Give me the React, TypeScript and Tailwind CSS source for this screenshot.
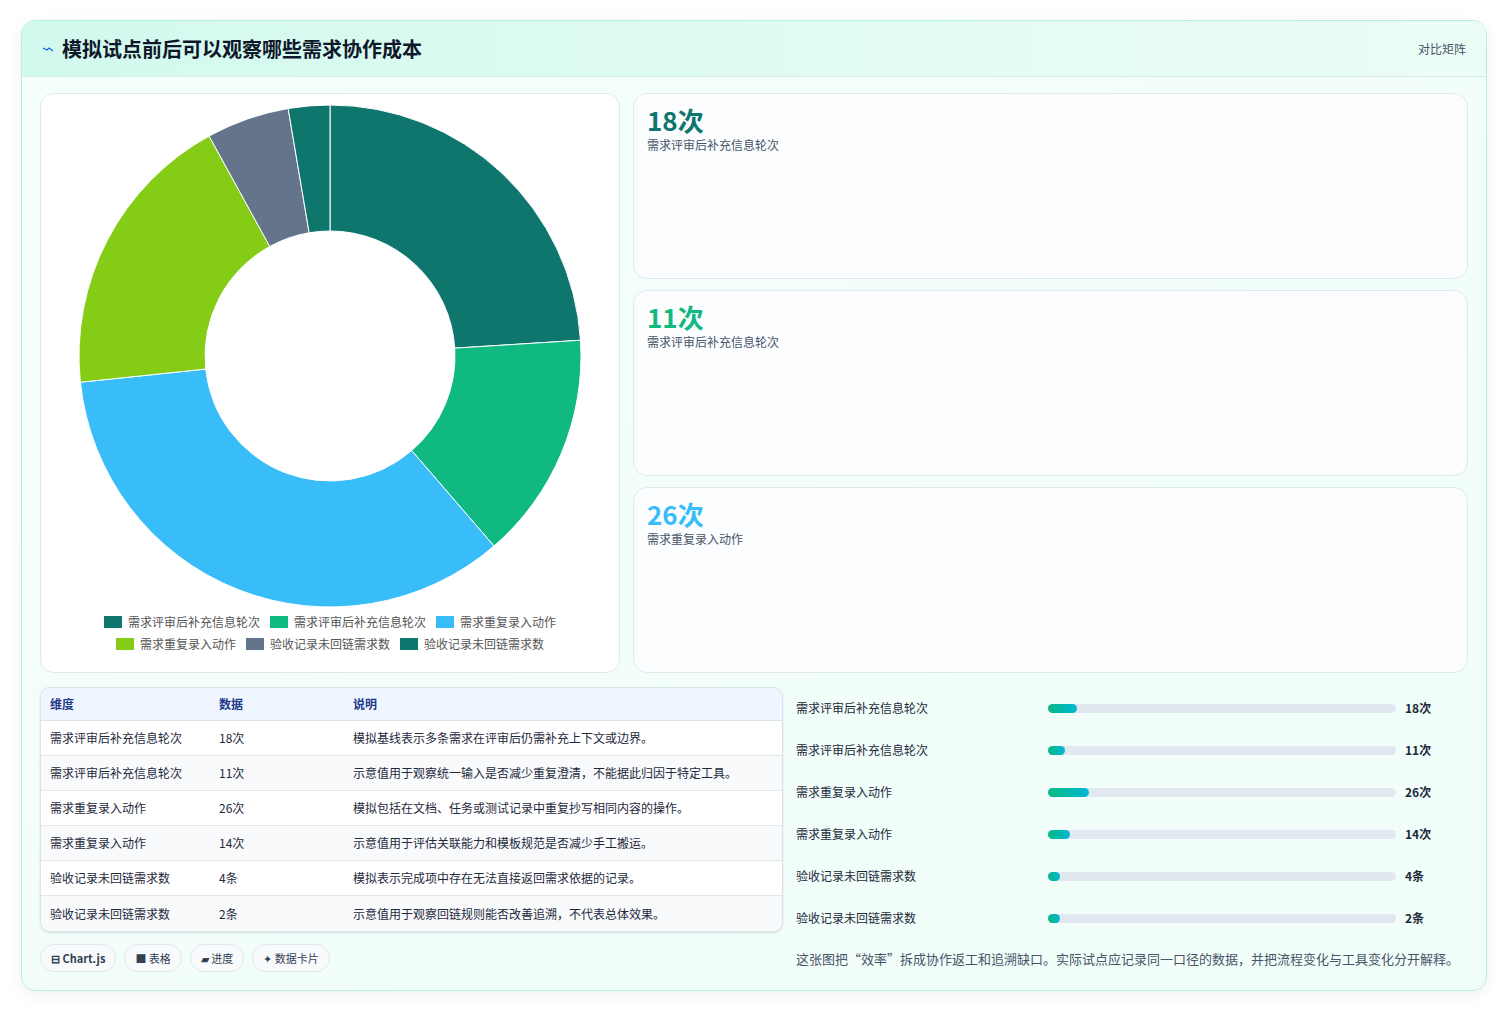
import React from "react";

const F = { fontFamily: '"Noto Sans CJK SC","Noto Sans",sans-serif' };
const data = [
  { n: "需求评审后补充信息轮次", v: 18, u: "次", c: "#0f766e", d: "模拟基线表示多条需求在评审后仍需补充上下文或边界。", w: 29 },
  { n: "需求评审后补充信息轮次", v: 11, u: "次", c: "#10b981", d: "示意值用于观察统一输入是否减少重复澄清，不能据此归因于特定工具。", w: 17 },
  { n: "需求重复录入动作", v: 26, u: "次", c: "#38bdf8", d: "模拟包括在文档、任务或测试记录中重复抄写相同内容的操作。", w: 41 },
  { n: "需求重复录入动作", v: 14, u: "次", c: "#84cc16", d: "示意值用于评估关联能力和模板规范是否减少手工搬运。", w: 22 },
  { n: "验收记录未回链需求数", v: 4, u: "条", c: "#64748b", d: "模拟表示完成项中存在无法直接返回需求依据的记录。", w: 12 },
  { n: "验收记录未回链需求数", v: 2, u: "条", c: "#0f766e", d: "示意值用于观察回链规则能否改善追溯，不代表总体效果。", w: 12 },
];

function Donut() {
  const total = data.reduce((s, d) => s + d.v, 0);
  const cx = 251, cy = 251, R = 251, r = 125;
  let a = 0;
  const pt = (ang: number, rad: number) => [cx + rad * Math.sin(ang), cy - rad * Math.cos(ang)];
  return (
    <svg width="502" height="502" viewBox="0 0 502 502">
      {data.map((d, i) => {
        const a0 = a, a1 = a + (d.v / total) * Math.PI * 2;
        a = a1;
        const large = a1 - a0 > Math.PI ? 1 : 0;
        const [x0, y0] = pt(a0, R), [x1, y1] = pt(a1, R), [x2, y2] = pt(a1, r), [x3, y3] = pt(a0, r);
        return <path key={i} d={`M${x0} ${y0}A${R} ${R} 0 ${large} 1 ${x1} ${y1}L${x2} ${y2}A${r} ${r} 0 ${large} 0 ${x3} ${y3}Z`} fill={d.c} stroke="#fff" strokeWidth="1" />;
      })}
    </svg>
  );
}

export default function App() {
  return (
    <div className="min-h-screen bg-white pt-[20px] px-[21px]" style={F}>
      <div className="w-[1466px] h-[971px] rounded-[14px] border border-[#b5efe2] bg-gradient-to-br from-[#f5fffc] to-[#f0fdf8] shadow-[0_4px_16px_rgba(0,0,0,0.06)] overflow-hidden flex flex-col">
        <div className="h-[56px] flex items-center justify-between px-[20px] bg-gradient-to-r from-[#d2f9ee] to-[#ecfdf5] border-b border-[#d6efe9]">
          <div className="flex items-center gap-[8px]">
            <svg width="12" height="10" viewBox="0 0 12 10"><path d="M1 4l4 2 2-2 4 3" stroke="#2563eb" strokeWidth="1.3" fill="none" /></svg>
            <span className="text-[20px] font-bold text-[#0f172a]">模拟试点前后可以观察哪些需求协作成本</span>
          </div>
          <span className="text-[12px] text-[#475569]">对比矩阵</span>
        </div>
        <div className="px-[18px] pt-[16px] flex flex-col">
          <div className="flex gap-[13px] h-[580px]">
            <div className="w-[580px] rounded-[14px] border border-[#e2e8f0] bg-white flex flex-col items-center pt-[11px]">
              <Donut />
              <div className="mt-[6px] flex flex-wrap justify-center gap-x-[10px] gap-y-[4px] w-[470px] text-[12px] text-[#555]">
                {data.map((d, i) => (
                  <div key={i} className="flex items-center gap-[6px] h-[18px]">
                    <span className="w-[18px] h-[12px]" style={{ background: d.c }} />
                    {d.n}
                  </div>
                ))}
              </div>
            </div>
            <div className="flex-1 flex flex-col gap-[11px]">
              {[[18, "次", "#0f766e", "需求评审后补充信息轮次"], [11, "次", "#10b981", "需求评审后补充信息轮次"], [26, "次", "#38bdf8", "需求重复录入动作"]].map((c, i) => (
                <div key={i} className="flex-1 rounded-[14px] border border-[#e2e8f0] bg-[#fbfdff] px-[13px] pt-[8px]">
                  <div className="text-[26px] font-bold leading-[36px]" style={{ color: c[2] as string }}>{c[0]}{c[1]}</div>
                  <div className="text-[12px] text-[#475569] mt-[-2px]">{c[3]}</div>
                </div>
              ))}
            </div>
          </div>
          <div className="flex gap-[13px] mt-[14px]">
            <div className="w-[743px] flex flex-col">
              <div className="rounded-[10px] border border-[#dbe3ec] bg-white overflow-hidden text-[12px] text-[#1e293b] shadow-sm">
                <div className="flex h-[33px] items-center bg-[#eff6ff] border-b border-[#dbe3ec] text-[#1e3a8a] font-semibold">
                  <span className="w-[178px] pl-[9px]">维度</span><span className="w-[134px]">数据</span><span>说明</span>
                </div>
                {data.map((d, i) => (
                  <div key={i} className={`flex h-[35px] items-center ${i < 5 ? "border-b border-[#e5e7eb]" : ""} ${i % 2 ? "bg-[#f8fafc]" : "bg-white"}`}>
                    <span className="w-[178px] pl-[9px]">{d.n}</span><span className="w-[134px]">{d.v}{d.u}</span><span>{d.d}</span>
                  </div>
                ))}
              </div>
              <div className="flex gap-[8px] mt-[12px] text-[11px] text-[#334155]">
                {["⊟ Chart.js", "■ 表格", "▰ 进度", "✦ 数据卡片"].map((t, i) => (
                  <span key={i} className={`h-[28px] px-[10px] rounded-full border border-[#e2e8f0] bg-[#f8fafc] flex items-center ${i === 0 ? "font-bold" : ""}`}>{t}</span>
                ))}
              </div>
            </div>
            <div className="flex-1 pl-[0px] flex flex-col text-[12px] text-[#1e293b]">
              {data.map((d, i) => (
                <div key={i} className="flex items-center h-[42px]">
                  <span className="w-[252px]">{d.n}</span>
                  <div className="w-[348px] h-[9px] rounded-full bg-[#e2e8f0]">
                    <div className="h-full rounded-full bg-gradient-to-r from-[#10b981] to-[#06b6d4]" style={{ width: d.w }} />
                  </div>
                  <span className="ml-[9px] font-bold">{d.v}{d.u}</span>
                </div>
              ))}
              <div className="mt-[10px] text-[13px] text-[#475569]">这张图把“效率”拆成协作返工和追溯缺口。实际试点应记录同一口径的数据，并把流程变化与工具变化分开解释。</div>
            </div>
          </div>
        </div>
      </div>
    </div>
  );
}
